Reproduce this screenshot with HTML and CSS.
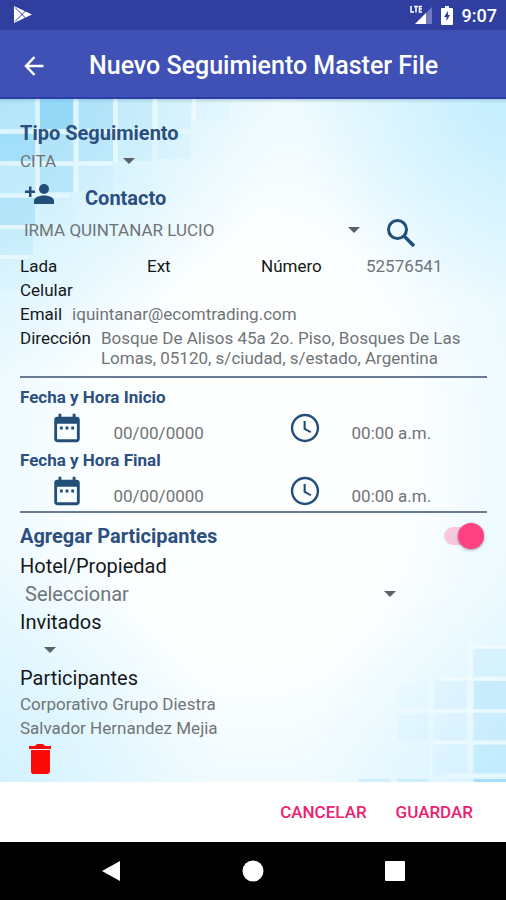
FILE: index.html
```html
<!DOCTYPE html>
<html lang="es">
<head>
<meta charset="utf-8">
<meta name="viewport" content="width=device-width, initial-scale=1">
<title>Nuevo Seguimiento Master File</title>
<link rel="stylesheet" href="styles.css">
</head>
<body>
<svg width="0" height="0" class="defs" aria-hidden="true">
  <symbol id="calendar" viewBox="0 0 24 24"><path d="M9 11H7v2h2v-2zm4 0h-2v2h2v-2zm4 0h-2v2h2v-2zm2-7h-1V2h-2v2H8V2H6v2H5c-1.100 0-2 .9-2 2v14c0 1.100.9 2 2 2h14c1.100 0 2-.9 2-2V6c0-1.100-.9-2-2-2zm0 16H5V9h14v11z"/></symbol>
  <symbol id="clock" viewBox="0 0 24 24"><path d="M12 2C6.500 2 2 6.500 2 12s4.500 10 10 10 10-4.500 10-10S17.500 2 12 2zm0 18.300c-4.600 0-8.300-3.700-8.300-8.300S7.400 3.700 12 3.700s8.300 3.700 8.300 8.300-3.700 8.300-8.300 8.300zM12.500 7H11v6l4.800 2.600.7-1.200-4-2.200z"/></symbol>
</svg>
<div class="status">
  <svg class="play" viewBox="0 0 18 18" aria-hidden="true"><path d="M0 0 18 8.500 0 17z" fill="#fff"/><path d="M1 1.500 11.500 12M1 15.500 11.500 5" stroke="#303f9f" fill="none"/></svg>
  <svg class="signal" viewBox="0 0 24 20" aria-hidden="true"><path d="M22 2v17H5z" fill="#7079c4"/><path d="M16 8v11H5z" fill="#fff"/><path d="M1 1v6h3M4 1.500h4M6 1.500V7.500M12 1.500H9.500V7H12M9.500 4H12" stroke="#fff" stroke-width="1.500" fill="none"/></svg>
  <svg class="battery" viewBox="0 0 12 19" aria-hidden="true"><path d="M4 0h4v2h3q1 0 1 1v15q0 1-1 1H1q-1 0-1-1V3q0-1 1-1h3z" fill="#fff"/><path d="M7 5 3 11h2.500v4L9 9H7z" fill="#303f9f"/></svg>
  <span>9:07</span>
</div>
<header class="bar">
  <button class="icon-btn" aria-label="Volver"><svg class="back" viewBox="0 0 20 20"><path d="M19 10H2M10 1 1.500 10l8.500 9" fill="none" stroke="#fff" stroke-width="2.500"/></svg></button>
  <h1>Nuevo Seguimiento Master File</h1>
</header>
<main>
  <svg class="tiles tiles-top" viewBox="0 0 240 240" aria-hidden="true">
    <g fill="#5cc2f0">
      <path d="M0 0h35v30H0z" opacity=".16"/><path d="M40 0h33v30H40z" opacity=".5"/><path d="M79 0h34v30H79z" opacity=".28"/><path d="M118 0h34v30h-34z" opacity=".14"/><path d="M158 0h33v30h-33z" opacity=".07"/><path d="M197 0h33v22h-33z" opacity=".03"/>
      <path d="M0 35h35v27H0z" opacity=".36"/><path d="M40 35h33v27H40z" opacity=".26"/><path d="M79 35h34v27H79z" opacity=".22"/><path d="M118 35h34v27h-34z" opacity=".1"/><path d="M158 35h33v25h-33z" opacity=".06"/>
      <path d="M0 67h35v27H0z" opacity=".12"/><path d="M40 67h33v26H40z" opacity=".25"/><path d="M79 67h34v26H79z" opacity=".06"/><path d="M118 67h34v26h-34z" opacity=".02"/>
      <path d="M0 99h35v27H0z" opacity=".27"/><path d="M40 99h33v27H40z" opacity=".03"/><path d="M0 130h33v26H0z" opacity=".12"/><path d="M0 160h31v30H0z" opacity=".04"/>
    </g>
    <g stroke="#fff" stroke-width="4" opacity=".36" fill="none"><path d="M37.500 0v94M76 0v94M115.500 0v64M155 0v40M194 0v22M0 32.500h150M0 64.500h112M0 96.500h70M0 128h34M0 158h28"/></g>
  </svg>
  <svg class="tiles tiles-bottom" viewBox="0 0 150 150" aria-hidden="true">
    <g fill="#6fccf8">
      <path d="M118 17h32v27h-32z" opacity=".12"/><path d="M118 49h32v28h-32z" opacity=".22"/><path d="M118 81h32v27h-32z" opacity=".17"/><path d="M118 113h32v28h-32z" opacity=".2"/><path d="M118 147h32v3h-32z" opacity=".5"/>
      <path d="M79 49h31v28H79z" opacity=".07"/><path d="M41 52h31v25H41z" opacity=".02"/><path d="M79 82h31v26H79z" opacity=".05"/><path d="M41 82h31v26H41z" opacity=".06"/><path d="M79 113h31v28H79z" opacity=".04"/><path d="M2 147h31v3H2zM41 147h31v3H41z" opacity=".2"/>
    </g>
    <g stroke="#fff" stroke-width="3" opacity=".4" fill="none"><path d="M114 10v136M118 15h32M84 47h66M76 79h74M80 110.500h70M90 144h60"/><path d="M75 50v94M40 79h36" opacity=".5"/></g>
  </svg>
  <form class="form">
    <label class="title" for="tipo">Tipo Seguimiento</label>
    <div class="pick pick-tipo"><select id="tipo"><option>CITA</option></select></div>
    <div class="contact-head">
      <button type="button" class="icon-btn" aria-label="Agregar contacto"><svg class="add" viewBox="0 0 30 26"><circle cx="19" cy="6" r="5"/><path d="M9 21v-3c0-4 6-5.500 10-5.500s10 1.500 10 5.500v3zM4 3.500h2.500V7.500H10V10H6.500v4H4v-4H0V7.500h4z"/></svg></button>
      <label class="title" for="contacto">Contacto</label>
    </div>
    <div class="contact-row">
      <div class="pick pick-contacto"><select id="contacto"><option>IRMA QUINTANAR LUCIO</option></select></div>
      <button type="button" class="icon-btn" aria-label="Buscar"><svg class="search" viewBox="0 0 30 30"><circle cx="11.500" cy="11.500" r="9" fill="none" stroke="#234e7a" stroke-width="3"/><path d="m18 18 10 10" stroke="#234e7a" stroke-width="3.500"/></svg></button>
    </div>
    <div class="phones"><b>Lada</b><b>Ext</b><b>Número</b><span>52576541</span></div>
    <div class="line"><b>Celular</b></div>
    <div class="line"><b>Email</b><span>iquintanar@ecomtrading.com</span></div>
    <div class="line address"><b>Dirección</b><span>Bosque De Alisos 45a 2o. Piso, Bosques De Las Lomas, 05120, s/ciudad, s/estado, Argentina</span></div>
    <section class="dates">
      <h2>Fecha y Hora Inicio</h2>
      <div class="when">
        <button type="button" class="icon-btn" aria-label="Elegir fecha de inicio"><svg><use href="#calendar"/></svg></button>
        <input aria-label="Fecha de inicio" value="00/00/0000">
        <button type="button" class="icon-btn" aria-label="Elegir hora de inicio"><svg><use href="#clock"/></svg></button>
        <input aria-label="Hora de inicio" value="00:00 a.m.">
      </div>
      <h2>Fecha y Hora Final</h2>
      <div class="when">
        <button type="button" class="icon-btn" aria-label="Elegir fecha final"><svg><use href="#calendar"/></svg></button>
        <input aria-label="Fecha final" value="00/00/0000">
        <button type="button" class="icon-btn" aria-label="Elegir hora final"><svg><use href="#clock"/></svg></button>
        <input aria-label="Hora final" value="00:00 a.m.">
      </div>
    </section>
    <div class="toggle"><label class="title" for="agregar">Agregar Participantes</label><input id="agregar" class="switch" type="checkbox" role="switch" checked></div>
    <label class="field" for="hotel">Hotel/Propiedad</label>
    <div class="pick pick-hotel"><select id="hotel"><option>Seleccionar</option></select></div>
    <label class="field" for="invitados">Invitados</label>
    <div class="pick pick-invitados"><select id="invitados"><option></option></select></div>
    <h3 class="field">Participantes</h3>
    <p>Corporativo Grupo Diestra</p>
    <p>Salvador Hernandez Mejia</p>
    <button type="button" class="icon-btn delete" aria-label="Eliminar participante"><svg class="trash" viewBox="0 0 24 30"><path d="M1 2h6l2-2h6l2 2h6v3H1zM3 6h19v21q0 3-3 3H5q-2 0-2-3z" fill="#fb0a0a"/></svg></button>
  </form>
</main>
<footer class="actions"><button>CANCELAR</button><button>GUARDAR</button></footer>
<nav class="nav">
  <button class="icon-btn" aria-label="Atrás"><svg viewBox="0 0 22 22"><path d="M20 1v20L2 11z"/></svg></button>
  <button class="icon-btn" aria-label="Inicio"><svg viewBox="0 0 22 22"><circle cx="11" cy="11" r="10.500"/></svg></button>
  <button class="icon-btn" aria-label="Recientes"><svg viewBox="0 0 22 22"><rect x="1" y="1" width="20" height="20" rx="1"/></svg></button>
</nav>
</body>
</html>
```
FILE: styles.css
```css
* { box-sizing: border-box; }
body {
  margin: 0;
  min-height: 100vh;
  display: flex;
  flex-direction: column;
  background: #fff;
  color: #111;
  font-family: Roboto, sans-serif;
  font-size: 17px;
}
button, input, select { font: inherit; color: inherit; border: 0; padding: 0; margin: 0; background: none; }
h1, h2, h3, p { margin: 0; font-weight: 400; }
b { font-weight: 400; }
svg { display: block; }
.defs { position: absolute; }
.icon-btn { display: flex; align-items: center; justify-content: center; fill: #234e7a; }

.status {
  height: 30px;
  padding: 0 9px 0 14px;
  display: flex;
  align-items: center;
  background: #303f9f;
  color: #fff;
  font-size: 18px;
  font-weight: 500;
}
.play { width: 18px; height: 18px; }
.signal { width: 24px; height: 20px; margin-left: auto; }
.battery { width: 12px; height: 19px; margin: 0 9px 0 7px; }

.bar {
  height: 69px;
  padding: 4px 24px 0;
  display: flex;
  align-items: center;
  gap: 44px;
  background: #3f51b5;
  border-bottom: 2px solid #2c3da6;
  color: #fff;
}
.bar h1 { font-size: 25px; font-weight: 500; line-height: 32px; white-space: nowrap; }
.back { width: 21px; height: 20px; }

main {
  flex: 1;
  position: relative;
  overflow: hidden;
  background:
    linear-gradient(#6c9cb866, #ffffff00 4px),
    radial-gradient(circle at 100% 0, #bdecffcc, #ffffff00 210px),
    radial-gradient(circle at 100% 100%, #c5eeff66, #ffffff00 200px),
    radial-gradient(circle at 0 100%, #c5eeff88, #ffffff00 220px),
    radial-gradient(circle at 0 0, #b9eafbbb, #ffffff00 280px),
    radial-gradient(ellipse at 50% 52%, #fdffff 40%, #e0f6ff 100%);
}
.tiles { position: absolute; }
.tiles-top { top: 0; left: 0; width: 240px; height: 240px; }
.tiles-bottom { right: 0; bottom: 0; width: 150px; height: 150px; }

.form { position: relative; padding: 22px 19px 4px 20px; color: #707476; }
.title { display: block; color: #2b4f7f; font-size: 20px; font-weight: 700; line-height: 24px; }
.form b, .field { color: #151719; }
.pick { position: relative; height: 28px; }
.pick select { appearance: none; width: 100%; height: 28px; outline: 0; }
.pick::after {
  content: "";
  position: absolute;
  right: 2px;
  top: 11px;
  border: 6px solid transparent;
  border-top-color: #5b6265;
  border-bottom: 0;
  pointer-events: none;
}
.pick-tipo { width: 25%; margin: 2px 0; }
.contact-head { display: flex; align-items: center; gap: 30px; height: 39px; padding: 3px 0 0 5px; }
.add { width: 30px; height: 26px; margin-bottom: 4px; }
.contact-row { display: flex; gap: 24px; height: 38px; padding-left: 4px; }
.contact-row .icon-btn { height: 34px; }
.pick-contacto { width: 73%; }
.search { width: 30px; height: 30px; }
.phones { display: grid; grid-template-columns: 127fr 114fr 105fr 121fr; line-height: 24px; }
.line { display: flex; gap: 10px; line-height: 24px; }
.address { line-height: 20px; padding: 2px 0 8px; }
.dates { border: solid #697a96; border-width: 2px 0; padding-top: 7px; }
.dates h2 { color: #2b4f7f; font-size: 17px; font-weight: 700; line-height: 24px; }
.when { display: grid; grid-template-columns: 20fr 31fr 20fr 29fr; height: 39px; }
.when .icon-btn { height: 38px; }
.when svg { width: 34px; height: 34px; }
.when input { width: 100%; min-width: 0; padding-top: 8px; }

.toggle { display: flex; align-items: center; justify-content: space-between; height: 32px; margin-top: 7px; padding-right: 3px; }
.switch {
  appearance: none;
  position: relative;
  width: 40px;
  height: 18px;
  border-radius: 9px;
  background: #f8c8dc;
}
.switch::after {
  content: "";
  position: absolute;
  top: -4px;
  right: 0;
  width: 26px;
  height: 26px;
  border-radius: 50%;
  background: #ff4081;
  box-shadow: 0 1px 3px #0006;
}
.field { display: block; font-size: 20px; line-height: 28px; }
.pick-hotel { width: 81%; padding-left: 5px; font-size: 20px; }
.pick-invitados { width: 38px; }
.form p { line-height: 24px; }
.delete { width: 40px; height: 38px; }
.trash { width: 24px; height: 30px; }

.actions {
  display: flex;
  align-items: center;
  justify-content: flex-end;
  gap: 29px;
  height: 60px;
  padding-right: 33px;
  background: #fff;
  color: #ec2170;
  font-weight: 500;
}
.nav { display: flex; height: 58px; justify-content: space-around; align-items: center; padding: 0 40px; background: #000; }
.nav .icon-btn { fill: #fff; }
.nav svg { width: 22px; height: 22px; }
```
